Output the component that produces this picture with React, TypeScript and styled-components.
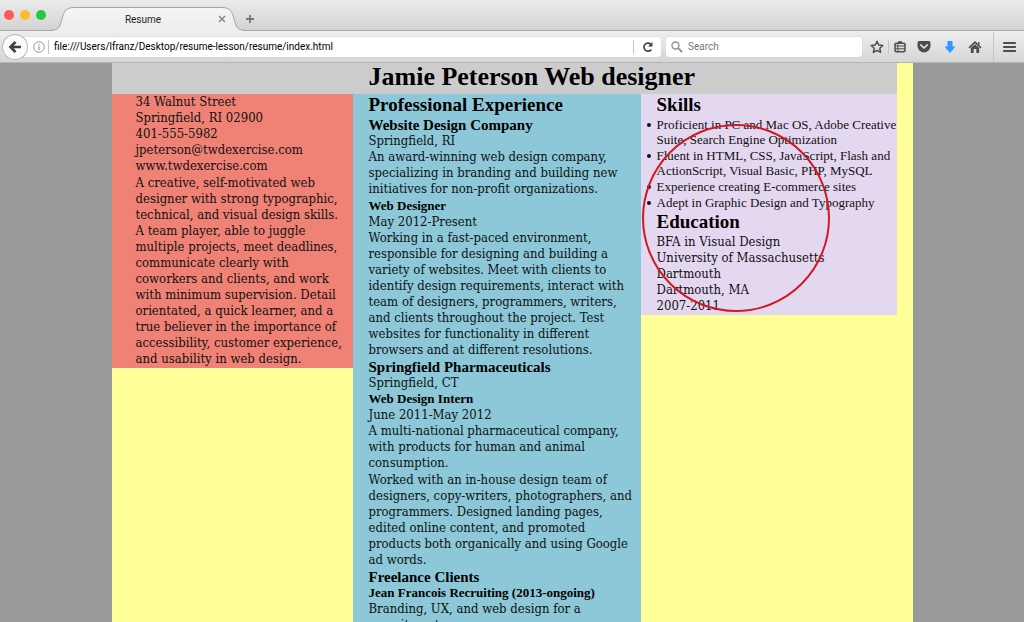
import React from "react";
import styled, { createGlobalStyle } from "styled-components";

const GlobalStyle = createGlobalStyle`
  *, *::before, *::after { box-sizing: border-box; }
  html, body, #root { height: 100%; }
  body { margin: 0; overflow: hidden; }
  h1, h2, h3, h4, p, ul, address { margin: 0; padding: 0; }
  button, input { font: inherit; color: inherit; margin: 0; padding: 0; border: 0; background: none; }
`;

const uiFont = `Roboto, "Liberation Sans", sans-serif`;
const headingFont = `"Liberation Serif", "Times New Roman", serif`;
const bodyFont = `"DejaVu Serif Condensed", "DejaVu Serif", serif`;

const Window = styled.div`
  display: flex;
  flex-direction: column;
  height: 100vh;
  font-family: ${uiFont};
  font-size: 10px;
  color: #222;
`;

const TabStrip = styled.header`
  display: flex;
  align-items: flex-end;
  flex: none;
  height: 31px;
  background: linear-gradient(#ebebeb, #d2d2d2);
  box-shadow: inset 0 -1px #a9a9a9;
`;

const Lights = styled.div`
  display: flex;
  align-self: flex-start;
  gap: 6px;
  padding: 10px 4px 0 4px;
`;

const Light = styled.button<{ $color: string }>`
  width: 10px;
  height: 10px;
  border-radius: 50%;
  background: ${(p) => p.$color};
`;

const Tab = styled.div`
  position: relative;
  display: flex;
  align-items: center;
  width: 196px;
  height: 24px;
  padding: 0 18px 0 20px;
`;

const TabShape = styled.svg`
  position: absolute;
  inset: 0;
`;

const TabTitle = styled.span`
  position: relative;
  flex: 1;
  text-align: center;
`;

const IconButton = styled.button<{ $width?: number }>`
  position: relative;
  display: flex;
  align-items: center;
  justify-content: center;
  flex: none;
  width: ${(p) => p.$width ?? 24}px;
  height: 24px;
`;

const Toolbar = styled.nav`
  display: flex;
  align-items: center;
  flex: none;
  height: 32px;
  padding-left: 2px;
  background: linear-gradient(#eeeeee, #d6d6d6);
  border-bottom: 1px solid #b4b4b4;
`;

const BackButton = styled.button`
  position: relative;
  z-index: 1;
  display: flex;
  align-items: center;
  justify-content: center;
  flex: none;
  width: 26px;
  height: 26px;
  margin-right: -14px;
  border-radius: 50%;
  background: #fbfbfb;
  box-shadow: inset 0 0 0 1px #b5b5b5;
`;

const Field = styled.div<{ $grow?: boolean }>`
  display: flex;
  align-items: center;
  flex: ${(p) => (p.$grow ? "1" : "0 0 196px")};
  min-width: 0;
  height: 20px;
  border-radius: 3px;
  background: #fff;
  box-shadow: 0 0 1px #b0b0b0;
`;

const UrlField = styled(Field)`
  padding-left: 16px;
  margin-right: 5px;
`;

const SearchField = styled(Field)`
  margin-right: 3px;
`;

const TextInput = styled.input`
  flex: 1;
  min-width: 0;
  height: 20px;
  outline: 0;
  &::placeholder { color: #777; opacity: 1; }
`;

const UrlInput = styled(TextInput)`
  padding-left: 5px;
  color: #000;
`;

const Divider = styled.span<{ $height?: number }>`
  flex: none;
  width: 1px;
  height: ${(p) => p.$height ?? 14}px;
  background: #c4c4c4;
`;

const MenuArea = styled.div`
  display: flex;
  align-items: center;
  padding-left: 6px;
`;

const Viewport = styled.main`
  flex: 1;
  min-height: 0;
  overflow: auto;
  scrollbar-width: none;
  background: #999;
`;

const Page = styled.div`
  display: grid;
  grid-template-columns: 241fr 288fr 256fr 16fr;
  grid-template-rows: auto 1fr;
  align-items: start;
  width: 100%;
  max-width: 801px;
  min-height: 100%;
  margin: 0 auto;
  background: #ffff99;
  color: #111;
  font-family: ${bodyFont};
  font-size: 13px;
  line-height: 16px;
`;

const Banner = styled.header`
  display: grid;
  grid-template-columns: subgrid;
  grid-column: 1 / 4;
  padding-bottom: 3px;
  background: #ccc;
`;

const Name = styled.h1`
  grid-column: 2 / 4;
  padding-left: 16px;
  font: bold 26px/28px ${headingFont};
  color: #000;
`;

const Column = styled.section<{ $fill: string; $indent: number }>`
  position: relative;
  grid-row: 2;
  min-width: 0;
  padding-left: ${(p) => p.$indent}px;
  background: ${(p) => p.$fill};
`;

const SectionTitle = styled.h2`
  padding-bottom: 2px;
  font: bold 19px/21px ${headingFont};
  color: #000;
`;

const Employer = styled.h3`
  font: bold 15px/16px ${headingFont};
  color: #000;
`;

const Role = styled.h4`
  font: bold 13px/16px ${headingFont};
  color: #000;
`;

const Line = styled.p`
  white-space: pre;
`;

const Paragraph = styled.p`
  padding-bottom: 1px;
  white-space: pre;
`;

const Contact = styled.address`
  padding-bottom: 1px;
  font-style: normal;
  white-space: pre;
`;

const SkillList = styled.ul`
  font: 13px/15px ${headingFont};
  list-style: none;
`;

const Skill = styled.li`
  position: relative;
  padding-bottom: 1px;
  white-space: pre;

  &::before {
    content: "";
    position: absolute;
    top: 6px;
    left: -10px;
    width: 4px;
    height: 4px;
    border-radius: 50%;
    background: #111;
  }
`;

const Highlight = styled.span`
  position: absolute;
  top: 30px;
  left: 1px;
  width: 188px;
  height: 188px;
  border: 2px solid #cf1a22;
  border-radius: 50%;
  pointer-events: none;
`;

const skills = [
  "Proficient in PC and Mac OS, Adobe Creative\nSuite, Search Engine Optimization",
  "Fluent in HTML, CSS, JavaScript, Flash and\nActionScript, Visual Basic, PHP, MySQL",
  "Experience creating E-commerce sites",
  "Adept in Graphic Design and Typography",
];

export default function App() {
  return (
    <Window>
      <GlobalStyle />
      <TabStrip>
        <Lights>
          <Light $color="#fc5b57" aria-label="Close window" />
          <Light $color="#fdbc2e" aria-label="Minimize window" />
          <Light $color="#28c940" aria-label="Zoom window" />
        </Lights>
        <Tab>
          <TabShape width="196" height="24" viewBox="0 0 196 24" aria-hidden="true">
            <defs>
              <linearGradient id="tabFill" x1="0" y1="0" x2="0" y2="1">
                <stop offset="0" stopColor="#f5f5f5" />
                <stop offset="1" stopColor="#ededed" />
              </linearGradient>
            </defs>
            <path d="M0 24C9 23 10 20 12 12C14 4 16 1 24 1H172C180 1 182 4 184 12C186 20 187 23 196 24Z" fill="url(#tabFill)" />
            <path d="M0 23.500C9 23 10 20 12 12C14 4 16 .5 24 .5H172C180 .5 182 4 184 12C186 20 187 23 196 23.500" fill="none" stroke="#a5a5a5" />
          </TabShape>
          <TabTitle>Resume</TabTitle>
          <IconButton $width={12} aria-label="Close tab">
            <svg width="8" height="8" viewBox="0 0 8 8"><path d="M1 1l6 6M7 1L1 7" stroke="#8d8d8d" strokeWidth="1.700" /></svg>
          </IconButton>
        </Tab>
        <IconButton $width={8} aria-label="New tab">
          <svg width="8" height="8" viewBox="0 0 8 8"><path d="M4 0v8M0 4h8" stroke="#777" strokeWidth="1.800" /></svg>
        </IconButton>
      </TabStrip>

      <Toolbar aria-label="Navigation">
        <BackButton aria-label="Back">
          <svg width="14" height="14" viewBox="0 0 14 14"><path d="M7.500 2L2.500 7l5 5M3 7h10" fill="none" stroke="#3f3f3f" strokeWidth="2.600" /></svg>
        </BackButton>
        <UrlField $grow>
          <IconButton $width={18} aria-label="Site information">
            <svg width="12" height="12" viewBox="0 0 12 12" fill="none" stroke="#999">
              <circle cx="6" cy="6" r="5.300" />
              <path d="M6 5.200v3.800M6 2.800v1.400" strokeWidth="1.200" />
            </svg>
          </IconButton>
          <Divider />
          <UrlInput aria-label="Address" defaultValue="file:///Users/lfranz/Desktop/resume-lesson/resume/index.html" />
          <Divider />
          <IconButton $width={27} aria-label="Reload">
            <svg width="12" height="12" viewBox="0 0 12 12">
              <path d="M9.300 8.400A4 4 0 1 1 8.800 3.300" fill="none" stroke="#444" strokeWidth="1.700" />
              <path d="M10.500 1v4.500H6z" fill="#444" />
            </svg>
          </IconButton>
        </UrlField>
        <SearchField>
          <IconButton $width={22} aria-label="Search">
            <svg width="12" height="12" viewBox="0 0 12 12" fill="none" stroke="#909090">
              <circle cx="4.500" cy="4.500" r="3.500" strokeWidth="1.400" />
              <path d="M7.200 7.200L11 11" strokeWidth="1.900" />
            </svg>
          </IconButton>
          <TextInput aria-label="Search the web" placeholder="Search" />
        </SearchField>
        <IconButton $width={23} aria-label="Bookmark this page">
          <svg width="14" height="14" viewBox="0 0 14 14"><path d="M7 1.300l1.700 3.700 4.100.500-3 2.800.8 4.100L7 10.400l-3.600 2 .8-4.100-3-2.800 4.100-.5z" fill="none" stroke="#4d4d4d" strokeWidth="1.500" strokeLinejoin="round" /></svg>
        </IconButton>
        <Divider />
        <IconButton $width={22} aria-label="Bookmarks">
          <svg width="12" height="13" viewBox="0 0 12 13">
            <path d="M4 3V1.200h4V3" fill="#4d4d4d" />
            <rect x="1" y="3.200" width="10" height="8.600" rx="1.200" fill="none" stroke="#4d4d4d" strokeWidth="1.500" />
            <path d="M1 6h10M1 8.800h10M3.900 3.200v8.600" stroke="#4d4d4d" strokeWidth="1" />
          </svg>
        </IconButton>
        <IconButton $width={26} aria-label="Save to Pocket">
          <svg width="14" height="12" viewBox="0 0 14 12">
            <path d="M2 0h10q1.500 0 1.500 1.500V5a6.500 6.500 0 0 1-13 0V1.500Q.5 0 2 0z" fill="#4d4d4d" />
            <path d="M3.800 4L7 7l3.200-3" fill="none" stroke="#e8e8e8" strokeWidth="1.700" strokeLinecap="round" strokeLinejoin="round" />
          </svg>
        </IconButton>
        <IconButton $width={26} aria-label="Downloads">
          <svg width="12" height="12" viewBox="0 0 12 12"><path d="M3.500 0h5v5.500h3L6 12 .5 5.500h3z" fill="#2b9aff" /></svg>
        </IconButton>
        <IconButton aria-label="Home">
          <svg width="14" height="12" viewBox="0 0 14 12">
            <path d="M1 6.800l6-5.600 6 5.600" fill="none" stroke="#4d4d4d" strokeWidth="1.600" />
            <path d="M2.800 7L7 3.200 11.200 7v5H8.300V8H5.700v4H2.800zM10 1h1.500v3L10 2.700z" fill="#4d4d4d" />
          </svg>
        </IconButton>
        <MenuArea>
          <Divider $height={30} />
          <IconButton $width={30} aria-label="Open menu">
            <svg width="14" height="12" viewBox="0 0 14 12"><path d="M2 2h11M2 6h11M2 10h11" stroke="#4d4d4d" strokeWidth="2.200" strokeLinecap="round" /></svg>
          </IconButton>
        </MenuArea>
      </Toolbar>

      <Viewport>
        <Page>
          <Banner>
            <Name>Jamie Peterson Web designer</Name>
          </Banner>

          <Column $fill="#f08275" $indent={24}>
            <Contact>{"34 Walnut Street\nSpringfield, RI 02900\n401-555-5982\njpeterson@twdexercise.com\nwww.twdexercise.com"}</Contact>
            <Paragraph>{"A creative, self-motivated web\ndesigner with strong typographic,\ntechnical, and visual design skills.\nA team player, able to juggle\nmultiple projects, meet deadlines,\ncommunicate clearly with\ncoworkers and clients, and work\nwith minimum supervision. Detail\norientated, a quick learner, and a\ntrue believer in the importance of\naccessibility, customer experience,\nand usability in web design."}</Paragraph>
          </Column>

          <Column $fill="#8cc8d8" $indent={16}>
            <SectionTitle>Professional Experience</SectionTitle>
            <Employer>Website Design Company</Employer>
            <Line>Springfield, RI</Line>
            <Paragraph>{"An award-winning web design company,\nspecializing in branding and building new\ninitiatives for non-profit organizations."}</Paragraph>
            <Role>Web Designer</Role>
            <Line>May 2012-Present</Line>
            <Paragraph>{"Working in a fast-paced environment,\nresponsible for designing and building a\nvariety of websites. Meet with clients to\nidentify design requirements, interact with\nteam of designers, programmers, writers,\nand clients throughout the project. Test\nwebsites for functionality in different\nbrowsers and at different resolutions."}</Paragraph>
            <Employer>Springfield Pharmaceuticals</Employer>
            <Line>Springfield, CT</Line>
            <Role>Web Design Intern</Role>
            <Line>June 2011-May 2012</Line>
            <Paragraph>{"A multi-national pharmaceutical company,\nwith products for human and animal\nconsumption."}</Paragraph>
            <Paragraph>{"Worked with an in-house design team of\ndesigners, copy-writers, photographers, and\nprogrammers. Designed landing pages,\nedited online content, and promoted\nproducts both organically and using Google\nad words."}</Paragraph>
            <Employer>Freelance Clients</Employer>
            <Role>Jean Francois Recruiting (2013-ongoing)</Role>
            <Paragraph>{"Branding, UX, and web design for a\nrecruitment agency."}</Paragraph>
          </Column>

          <Column $fill="#e4d8f1" $indent={16}>
            <SectionTitle>Skills</SectionTitle>
            <SkillList>
              {skills.map((skill) => (
                <Skill key={skill}>{skill}</Skill>
              ))}
            </SkillList>
            <SectionTitle>Education</SectionTitle>
            <Paragraph>{"BFA in Visual Design\nUniversity of Massachusetts\nDartmouth\nDartmouth, MA\n2007-2011"}</Paragraph>
            <Highlight aria-hidden="true" />
          </Column>
        </Page>
      </Viewport>
    </Window>
  );
}
